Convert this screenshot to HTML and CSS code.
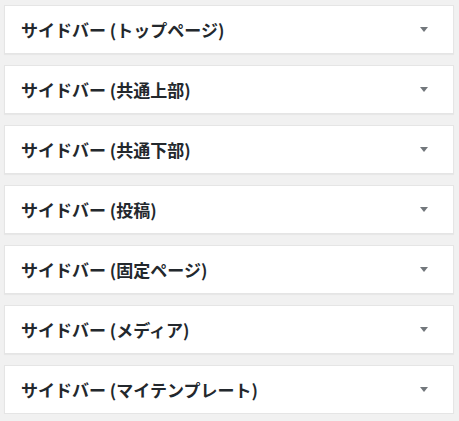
FILE: index.html
```html
<!DOCTYPE html>
<html lang="ja">
<head>
  <meta charset="UTF-8">
  <title>ウィジェット</title>
  <link rel="stylesheet" href="styles.css">
</head>
<body>
  <div class="widgets">
    <div class="widget"><span class="title">サイドバー (トップページ)</span><span class="arrow"></span></div>
    <div class="widget"><span class="title">サイドバー (共通上部)</span><span class="arrow"></span></div>
    <div class="widget"><span class="title">サイドバー (共通下部)</span><span class="arrow"></span></div>
    <div class="widget"><span class="title">サイドバー (投稿)</span><span class="arrow"></span></div>
    <div class="widget"><span class="title">サイドバー (固定ページ)</span><span class="arrow"></span></div>
    <div class="widget"><span class="title">サイドバー (メディア)</span><span class="arrow"></span></div>
    <div class="widget"><span class="title">サイドバー (マイテンプレート)</span><span class="arrow"></span></div>
  </div>
</body>
</html>
```

FILE: styles.css
```css
body {
  margin: 0;
  background: #f1f1f1;
  font-family: "Noto Sans CJK JP", "Noto Sans", sans-serif;
}

.widgets {
  display: flex;
  flex-direction: column;
  gap: 11px;
  width: 450px;
  padding: 5px 0 0 4px;
}

.widget {
  display: flex;
  align-items: center;
  justify-content: space-between;
  height: 47px;
  padding: 0 25px 0 16px;
  background: #fff;
  border: 1px solid #e5e5e5;
  box-shadow: 0 1px 1px rgba(0, 0, 0, 0.04);
}

.title {
  font-size: 17px;
  font-weight: bold;
  color: #23282d;
}

.arrow {
  width: 0;
  height: 0;
  border-left: 4px solid transparent;
  border-right: 4px solid transparent;
  border-top: 5px solid #72777c;
}
```
